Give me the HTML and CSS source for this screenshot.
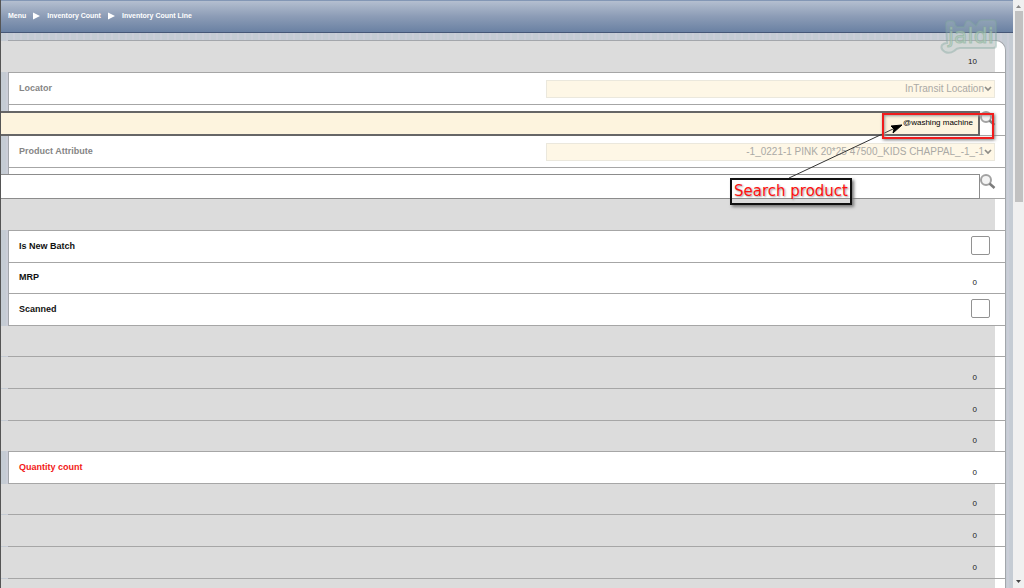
FILE: index.html
```
<!DOCTYPE html>
<html lang="en">
<head>
  <meta charset="UTF-8" />
  <meta name="viewport" content="width=device-width, initial-scale=1.0"/>
  <title>Inventory Count Line</title>
  <link rel="stylesheet" href="styles.css">
</head>
<body>
  <div class="screen">
    <header class="topbar">
      <nav class="breadcrumb">
        <a href="#">Menu</a>
        <svg width="7" height="8" viewBox="0 0 7 8"><path d="M0 0.5L7 4L0 7.5Z" fill="#fff"/></svg>
        <a href="#">Inventory Count</a>
        <svg width="7" height="8" viewBox="0 0 7 8"><path d="M0 0.5L7 4L0 7.5Z" fill="#fff"/></svg>
        <a href="#">Inventory Count Line</a>
      </nav>
    </header>

    <form class="panel">
      <div class="row hidden-field"><div class="fill"><output>10</output></div></div>
      <div class="row">
        <label class="dim" for="locator">Locator</label>
        <div class="combo">
          <select id="locator" disabled><option>InTransit Location</option></select>
          <svg width="8" height="6" viewBox="0 0 8 6"><path d="M1 1L4 4L7 1" fill="none" stroke="#8d8c86" stroke-width="1.7"/></svg>
        </div>
      </div>
      <div class="row search">
        <input class="active" type="text" value="@washing machine" aria-label="Product">
        <button type="button" aria-label="Find product">
          <svg width="16" height="16" viewBox="0 0 16 16"><circle cx="6" cy="6" r="5" fill="#f4f4f4" stroke="#a2a2a2" stroke-width="2"/><path d="M9.5 9.5L14.5 14" stroke="#7c7c7c" stroke-width="2.5"/></svg>
        </button>
      </div>
      <div class="row">
        <label class="dim" for="attribute">Product Attribute</label>
        <div class="combo">
          <select id="attribute" disabled><option>-1_0221-1 PINK 20*25 47500_KIDS CHAPPAL_-1_-1</option></select>
          <svg width="8" height="6" viewBox="0 0 8 6"><path d="M1 1L4 4L7 1" fill="none" stroke="#8d8c86" stroke-width="1.7"/></svg>
        </div>
      </div>
      <div class="row search">
        <input type="text" value="" aria-label="Batch">
        <button type="button" aria-label="Find batch">
          <svg width="16" height="16" viewBox="0 0 16 16"><circle cx="6" cy="6" r="5" fill="#f4f4f4" stroke="#a2a2a2" stroke-width="2"/><path d="M9.5 9.5L14.5 14" stroke="#7c7c7c" stroke-width="2.5"/></svg>
        </button>
      </div>
      <div class="row hidden-field"><div class="fill"></div></div>
      <div class="row"><label for="newBatch">Is New Batch</label><input id="newBatch" type="checkbox"></div>
      <div class="row"><label for="mrp">MRP</label><output id="mrp">0</output></div>
      <div class="row"><label for="scanned">Scanned</label><input id="scanned" type="checkbox"></div>
      <div class="row hidden-field"><div class="fill"></div></div>
      <div class="row hidden-field"><div class="fill"><output>0</output></div></div>
      <div class="row hidden-field"><div class="fill"><output>0</output></div></div>
      <div class="row hidden-field"><div class="fill"><output>0</output></div></div>
      <div class="row"><label class="required" for="quantity">Quantity count</label><output id="quantity">0</output></div>
      <div class="row hidden-field"><div class="fill"><output>0</output></div></div>
      <div class="row hidden-field"><div class="fill"><output>0</output></div></div>
      <div class="row hidden-field"><div class="fill"><output>0</output></div></div>
      <div class="row hidden-field"><div class="fill"></div></div>
    </form>

    <svg class="logo" width="58" height="36" viewBox="0 0 58 36">
      <path d="M6 5Q6 2 9 2H12Q15 2 15 6L17 8H24L26 3Q27 1 30 2L36 7L39 2Q40 1 43 1H53Q56 1 56 4V27Q56 29 53 29H20Q17 29 14 32Q10 35 5 33Q0 30 2 26Q4 24 7 24Z" fill="#b4c6c4" fill-opacity=".25" stroke="#7fa49e" stroke-opacity=".4" stroke-width="2"/>
      <text x="8" y="24" fill="#b5cfbd" fill-opacity=".6" stroke="#82ab93" stroke-opacity=".5" stroke-width="1">jaldi</text>
    </svg>

    <!-- callout on the product search box -->
    <svg class="arrow" width="120" height="58" viewBox="0 0 120 58">
      <path d="M4 55L108 6" stroke="#333" stroke-width="1"/>
      <path d="M117 2L108 10L109 6L106 3Z" fill="#000" stroke="#000"/>
    </svg>
    <div class="target"></div>
    <div class="note">Search product</div>
  </div>

  <div class="scrollbar">
    <svg width="5" height="3" viewBox="0 0 5 3"><path d="M0 3L2.5 0L5 3Z" fill="#888"/></svg>
    <div class="thumb"></div>
    <svg width="5" height="3" viewBox="0 0 5 3"><path d="M0 0H5L2.5 3Z" fill="#444"/></svg>
  </div>
</body>
</html>
```
FILE: styles.css
```
* {
  box-sizing: border-box;
}

body {
  margin: 0;
  height: 100vh;
  overflow: hidden;
  display: flex;
  font-family: "Liberation Sans", Arial, sans-serif;
  font-size: 8px;
  color: #222;
}

.screen {
  position: relative;
  flex: 1;
  overflow: hidden;
  border-left: 1px solid #555;
  background: repeating-linear-gradient(90deg, #c5ccd4 0 5px, #cbced8 5px 7px);
}

.topbar {
  height: 33px;
  padding: 0 7px;
  display: flex;
  align-items: center;
  border-top: 1px solid #8397b5;
  border-bottom: 1px solid #465777;
  background: linear-gradient(#b4bfd0, #8c9cb6 50%, #6a81a3);
}

.breadcrumb {
  display: flex;
  align-items: center;
  gap: 7px;
  margin-bottom: 2px;
}

.breadcrumb a {
  font-size: 7px;
  font-weight: bold;
  color: #fff;
  text-decoration: none;
}

.panel {
  margin: 7px 7px 0 7px;
  background: #fff;
  border: 1px solid #a3a6ab;
  border-bottom: none;
  border-radius: 0 10px 0 0;
}

.row {
  height: 32px;
  display: flex;
  align-items: center;
  justify-content: space-between;
  padding: 0 10px;
  border-bottom: 1px solid #a6a6a6;
}

.row:nth-child(5n+3),
.row:nth-child(5n+5) {
  height: 31px;
}

.row label {
  padding-bottom: 2px;
  font-size: 9px;
  font-weight: bold;
  color: #111;
}

.row .dim {
  color: #858585;
}

.row .required {
  color: #f21818;
}

.row output {
  margin: 9px 18px 0 0;
}

/* fields switched off by display logic */
.hidden-field {
  padding: 0 10px 0 0;
}

.fill {
  flex: 1;
  align-self: stretch;
  margin-left: -8px;
  display: flex;
  align-items: center;
  justify-content: flex-end;
  background: #dcdcdc;
}

.combo {
  width: 46%;
  height: 18px;
  display: flex;
  align-items: center;
  padding-right: 2px;
  border: 1px solid #ebe8dd;
  background: #fef7e6;
}

.combo select {
  flex: 1;
  min-width: 0;
  appearance: none;
  border: none;
  padding: 0;
  background: transparent;
  font-family: inherit;
  font-size: 10px;
  color: #aaa9a5;
  opacity: 1;
  text-align: right;
  text-align-last: right;
}

.search {
  align-items: flex-end;
  justify-content: flex-start;
  padding: 0 9px 0 0;
}

.search input {
  flex: 1;
  height: 25px;
  margin: 0 0 -1px -8px;
  padding: 0 5px;
  border: 1px solid #8c8c8c;
  border-left: none;
  border-radius: 0;
  background: #fff;
  font-family: inherit;
  font-size: 8px;
  text-align: right;
}

.search .active {
  padding-bottom: 2px;
  border: 2px solid #666;
  border-left: none;
  background: #fdf4de;
  outline: none;
}

.search button {
  align-self: flex-end;
  display: flex;
  margin-bottom: 8px;
  padding: 0;
  border: none;
  background: none;
}

input[type="checkbox"] {
  appearance: none;
  width: 19px;
  height: 19px;
  margin: 0 5px 2px 0;
  border: 1px solid #929292;
  border-radius: 2px;
  background: #fff;
}

.logo {
  position: absolute;
  top: 19px;
  right: 15px;
}

.logo text {
  font-family: "DejaVu Sans", sans-serif;
  font-size: 22px;
}

.arrow {
  position: absolute;
  top: 123px;
  right: 108px;
}

.target {
  position: absolute;
  top: 113px;
  right: 19px;
  width: 112px;
  height: 26px;
  border: 2px solid #f01c1c;
  box-shadow: 1px 1px 3px #777, inset 1px 1px 3px #999;
}

.note {
  position: absolute;
  top: 178px;
  right: 161px;
  padding: 3px 2px;
  border: 2px solid #111;
  box-shadow: 2px 2px 3px #777;
  font-family: "DejaVu Sans", sans-serif;
  font-size: 15px;
  line-height: 17px;
  color: #ff1010;
  text-shadow: 1px 1px 2px #999;
}

.scrollbar {
  width: 11px;
  display: flex;
  flex-direction: column;
  align-items: center;
  padding: 5px 0;
  background: #f0f0f0;
}

.scrollbar .thumb {
  width: 8px;
  height: 33%;
  margin: 3px 0 auto;
  background: #c1c1c1;
}
```
